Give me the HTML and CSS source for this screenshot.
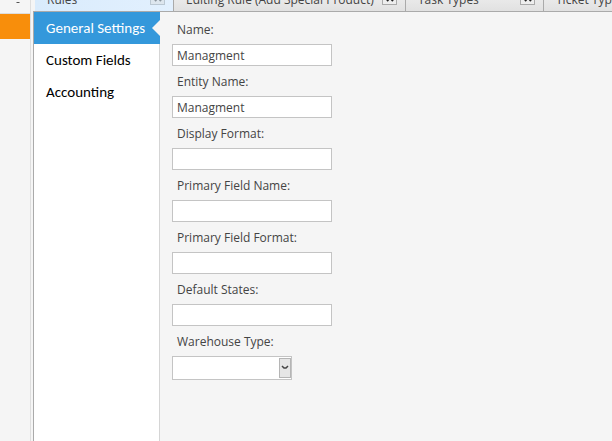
FILE: index.html
```
<!DOCTYPE html>
<html lang="en">
<head>
<meta charset="utf-8">
<title>Entity Settings</title>
<link rel="stylesheet" href="styles.css">
</head>
<body>
<div class="app">
  <aside class="rail">
    <div class="rail-head"><svg width="4" height="2" viewBox="0 0 4 2"><path d="M0 0h4L3 1H1z" fill="#555"/></svg></div>
    <div class="rail-active"></div>
  </aside>
  <main class="main">
    <div class="tabs">
      <div class="tab tab-rules tab-on"><span>Rules</span><button class="close" type="button" aria-label="Close Rules"><svg width="8" height="8" viewBox="0 0 8 8"><path d="M1 0l6 7M7 0L1 7"/></svg></button></div>
      <div class="tab tab-edit"><span>Editing Rule (Add Special Product)</span><button class="close" type="button" aria-label="Close Editing Rule"><svg width="8" height="8" viewBox="0 0 8 8"><path d="M1 0l6 7M7 0L1 7"/></svg></button></div>
      <div class="tab tab-task"><span>Task Types</span><button class="close" type="button" aria-label="Close Task Types"><svg width="8" height="8" viewBox="0 0 8 8"><path d="M1 0l6 7M7 0L1 7"/></svg></button></div>
      <div class="tab tab-ticket"><span>Ticket Types</span></div>
    </div>
    <div class="panel">
      <nav class="nav">
        <a class="nav-item nav-on" href="#general">General Settings</a>
        <a class="nav-item" href="#fields">Custom Fields</a>
        <a class="nav-item" href="#accounting">Accounting</a>
      </nav>
      <form class="form">
        <div class="field"><label for="name">Name:</label><input id="name" type="text" value="Managment"></div>
        <div class="field"><label for="entity">Entity Name:</label><input id="entity" type="text" value="Managment"></div>
        <div class="field"><label for="display">Display Format:</label><input id="display" type="text"></div>
        <div class="field"><label for="pname">Primary Field Name:</label><input id="pname" type="text"></div>
        <div class="field"><label for="pformat">Primary Field Format:</label><input id="pformat" type="text"></div>
        <div class="field"><label for="states">Default States:</label><input id="states" type="text"></div>
        <div class="field"><label for="warehouse">Warehouse Type:</label>
          <div class="combo"><select id="warehouse"><option></option></select><span class="combo-button"><svg width="8" height="6" viewBox="0 0 8 6"><path d="M1 1l2 2h2l2-2" fill="none" stroke="#444" stroke-width="1.5"/></svg></span></div>
        </div>
      </form>
    </div>
  </main>
</div>
</body>
</html>
```
FILE: styles.css
```
* { box-sizing: border-box; }
body {
  margin: 0;
  background: #f5f5f5;
  color: #444;
  font: 12px/20px "Open Sans", "Noto Sans", sans-serif;
}
.app { display: flex; min-height: 100vh; overflow: hidden; }

.rail { flex: 0 0 31px; border-right: 1px solid #dedede; }
.rail-head { height: 14px; border-bottom: 1px solid #ddd; padding-left: 16px; line-height: 0; }
.rail-active { height: 25px; background: #f88e0b; }

.main { flex: 1; min-width: 0; margin-left: 2px; display: flex; flex-direction: column; }
.tabs {
  display: flex;
  height: 12px;
  padding-left: 2px;
  border-bottom: 1px solid #aaa;
  overflow: hidden;
}
.tab {
  flex: none;
  display: flex;
  align-items: flex-end;
  justify-content: space-between;
  padding: 0 8px 1px 12px;
  border-right: 1px solid #aaa;
  background: linear-gradient(#e9e9e9, #e1e1e1);
  white-space: nowrap;
}
.tab-on { background: linear-gradient(90deg, #d9ebfc, #e2f0fe); }
.tab-rules { width: 139px; }
.tab-edit { width: 232px; }
.tab-task { width: 138px; }
.tab-ticket { width: 138px; }
.close {
  display: flex;
  align-items: center;
  justify-content: center;
  width: 15px;
  height: 14px;
  margin-bottom: 5px;
  padding: 0;
  border: 1px solid #aaa;
  background: #eee;
}
.close path { stroke: #222; stroke-width: 2; }
.tab-on .close { border-color: #bbc8d3; background: #dde6ee; }
.tab-on .close path { stroke: #8a949d; }

.panel { flex: 1; display: flex; border-left: 1px solid #aaa; }
.nav {
  flex: 0 0 126px;
  background: #fff;
  border-right: 1px solid #d5d5d5;
  font: 15px/32px Carlito, Lato, sans-serif;
}
.nav-item {
  display: block;
  position: relative;
  height: 32px;
  padding-left: 12px;
  color: #000;
  text-decoration: none;
  white-space: nowrap;
}
.nav-on { margin-right: -1px; background: #3498db; color: #fff; }
.nav-on::after {
  content: "";
  position: absolute;
  top: 8px;
  right: 0;
  border: 8px solid transparent;
  border-left-width: 0;
  border-right-color: #f5f5f5;
}

.form { display: flex; flex-direction: column; gap: 6px; padding: 8px 12px; }
.field { display: flex; flex-direction: column; align-items: flex-start; gap: 4px; }
.field label { padding-left: 5px; }
.field input, .combo select {
  width: 160px;
  height: 22px;
  padding: 0 4px;
  border: 1px solid #c4c4c4;
  border-radius: 0;
  background: #fff;
  color: #444;
  font: inherit;
}
.combo { position: relative; width: 120px; height: 24px; }
.combo select { width: 100%; height: 100%; appearance: none; }
.combo-button {
  position: absolute;
  top: 2px;
  right: 1px;
  bottom: 2px;
  width: 12px;
  display: flex;
  align-items: center;
  justify-content: center;
  border: 1px solid #b5b5b5;
  background: #e6e6e6;
  pointer-events: none;
}
.combo-button svg { flex: none; }
```
